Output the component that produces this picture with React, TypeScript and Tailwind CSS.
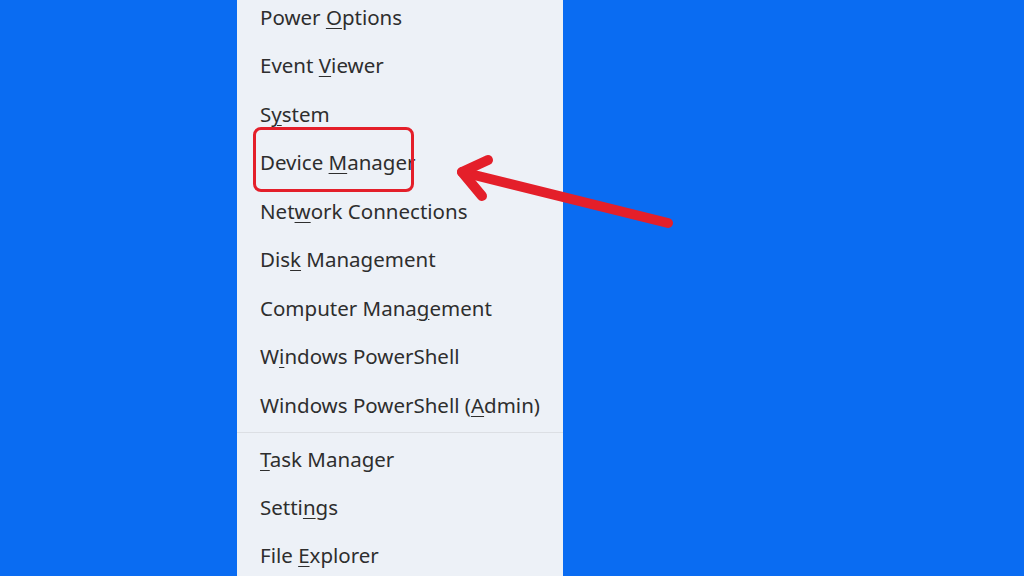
type Item = { pre: string; acc: string; post: string };

const items: Item[] = [
  { pre: "Power ", acc: "O", post: "ptions" },
  { pre: "Event ", acc: "V", post: "iewer" },
  { pre: "S", acc: "y", post: "stem" },
  { pre: "Device ", acc: "M", post: "anager" },
  { pre: "Net", acc: "w", post: "ork Connections" },
  { pre: "Dis", acc: "k", post: " Management" },
  { pre: "Computer Mana", acc: "g", post: "ement" },
  { pre: "W", acc: "i", post: "ndows PowerShell" },
  { pre: "Windows PowerShell (", acc: "A", post: "dmin)" },
];

const bottomItems: Item[] = [
  { pre: "", acc: "T", post: "ask Manager" },
  { pre: "Setti", acc: "n", post: "gs" },
  { pre: "File ", acc: "E", post: "xplorer" },
];

function MenuRow({ item, tall }: { item: Item; tall?: boolean }) {
  return (
    <div
      className={`${tall ? "h-[48.5px]" : "h-[48px]"} shrink-0 flex items-center pl-[23px] text-[20.5px] text-[#2e2e2e]`}
    >
      <span>
        {item.pre}
        <span className="underline underline-offset-[3px] decoration-1">{item.acc}</span>
        {item.post}
      </span>
    </div>
  );
}

export default function App() {
  return (
    <div
      className="relative w-[1024px] h-[576px] overflow-hidden bg-[#0a6cf2]"
      style={{ fontFamily: '"Noto Sans", "Open Sans", sans-serif' }}
    >
      <div className="ml-[237px] w-[326px] h-full bg-[#edf1f7] flex flex-col">
        <div className="-mt-[7px] shrink-0">
          {items.map((it) => (
            <MenuRow key={it.pre + it.acc + it.post} item={it} tall />
          ))}
        </div>
        <div className="h-[6px] shrink-0 flex items-center">
          <div className="w-full h-px bg-[#dcdfe4]" />
        </div>
        <div className="shrink-0">
          {bottomItems.map((it) => (
            <MenuRow key={it.pre + it.acc + it.post} item={it} />
          ))}
        </div>
      </div>

      {/* highlight box */}
      <div className="absolute left-[253px] top-[127px] w-[161px] h-[65px] border-[3px] border-[#e41f2a] rounded-[8px]" />

      {/* arrow */}
      <svg className="absolute left-0 top-0" width="1024" height="576" viewBox="0 0 1024 576">
        <g stroke="#e41f2a" strokeWidth="10" strokeLinecap="round" strokeLinejoin="round" fill="none">
          <path d="M668 223 L462 172" />
          <path d="M488 160 L462 172 L482 196" />
        </g>
      </svg>
    </div>
  );
}
